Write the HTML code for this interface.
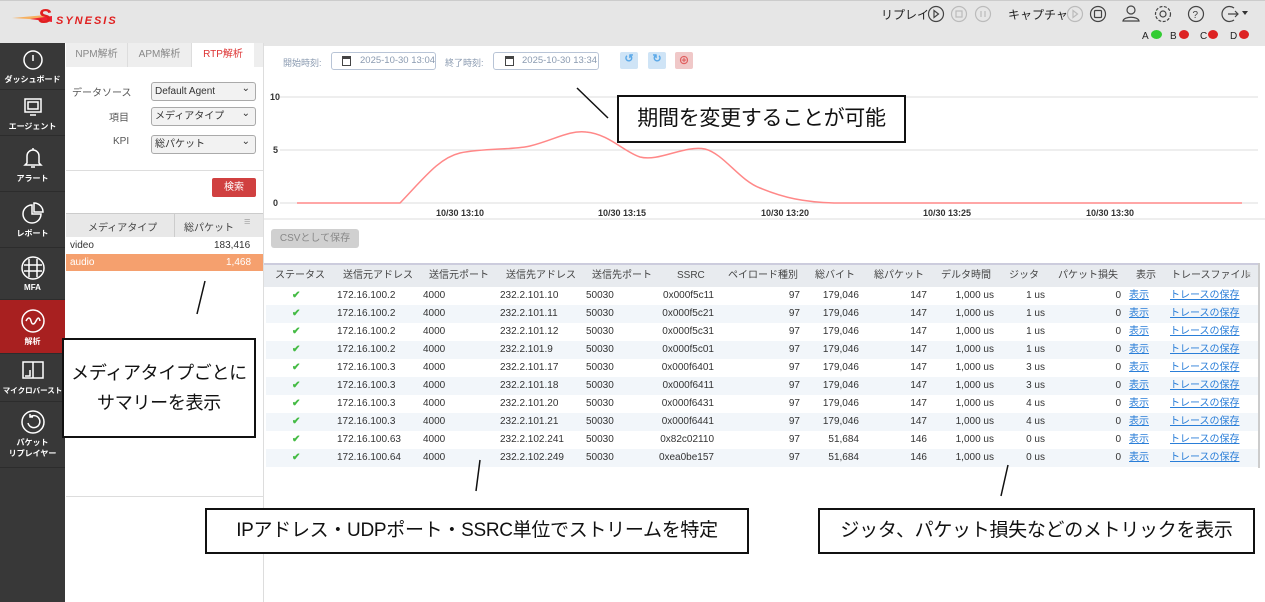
<!DOCTYPE html><html><head><meta charset="utf-8"><style>
*{margin:0;padding:0;box-sizing:border-box}
body{width:1265px;height:602px;position:relative;overflow:hidden;background:#fff;font-family:"Liberation Sans","Noto Sans CJK JP",sans-serif;font-size:10px;color:#333}
.a{position:absolute;white-space:nowrap}
.side .it{position:absolute;left:0;width:65px;color:#fff;font-size:8px;font-weight:bold;text-align:center;border-bottom:1px solid #2c2c2c}
.sel{position:absolute;left:151px;width:105px;height:19px;border:1px solid #aaa;border-radius:3px;background:#f2f2f2;font-size:10px;line-height:15px;padding:1px 3px;color:#333}
.sel:after{content:"⌄";position:absolute;right:5px;top:-2px;font-size:10px}
.box{position:absolute;border:2px solid #111;background:#fff;color:#111;text-align:center;white-space:nowrap;letter-spacing:-0.3px}
.th{position:absolute;top:265px;height:22px;line-height:22px;font-size:10px;color:#444}
.row{position:absolute;left:266px;width:992px;height:18px}
.c{position:absolute;top:3px;font-size:10px;line-height:12px;color:#333}
.lk{color:#2a7ed8;text-decoration:underline}
</style></head><body>
<div class="a" style="left:0;top:0;width:1265px;height:43px;background:#e6e6e6;border-top:1px solid #ccc"></div>
<svg class="a" style="left:12px;top:4px" width="110" height="24"><polygon points="0,14 34,11 34,16" fill="#f6b060"/><polygon points="18,15 40,12 40,18" fill="#e23"/><text x="26" y="19" font-family="Liberation Sans" font-weight="bold" font-style="italic" font-size="20" fill="#e02020">S</text><text x="44" y="20" font-family="Liberation Sans" font-weight="bold" font-style="italic" font-size="11" fill="#e02020" letter-spacing="2">SYNESIS</text></svg>
<div class="a" style="left:881px;top:6px;font-size:12px;color:#222">リプレイ</div>
<svg class="a" style="left:926px;top:4px" width="340" height="20" fill="none" stroke-width="1.2">
<circle cx="10" cy="10" r="7.5" stroke="#444"/><path d="M8 6.5l4.5 3.5-4.5 3.5z" stroke="#444"/>
<circle cx="33" cy="10" r="7.5" stroke="#bbb"/><rect x="30" y="7" width="6" height="6" stroke="#bbb"/>
<circle cx="57" cy="10" r="7.5" stroke="#bbb"/><path d="M55 7v6M59 7v6" stroke="#bbb"/>
<circle cx="149" cy="10" r="7.5" stroke="#bbb"/><path d="M147 6.5l4.5 3.5-4.5 3.5z" stroke="#bbb"/>
<circle cx="172" cy="10" r="7.5" stroke="#444"/><rect x="168.5" y="6.5" width="7" height="7" rx="1" stroke="#444"/>
<circle cx="205" cy="6" r="4" stroke="#444"/><path d="M197 17c1-5 15-5 16 0z" stroke="#444"/>
<circle cx="237" cy="10" r="3" stroke="#444"/><circle cx="237" cy="10" r="7.5" stroke="#444" stroke-dasharray="3 1.5"/>
<circle cx="270" cy="10" r="7.5" stroke="#444"/><text x="266.5" y="14" font-size="10" fill="#444" stroke="none" font-family="Liberation Sans">?</text>
<path d="M308 4a7.5 7.5 0 1 0 0 12" stroke="#444"/><path d="M302 10h10M309 7l3 3-3 3" stroke="#444"/>
<path d="M316 7h6l-3 4z" fill="#333" stroke="none"/></svg>
<div class="a" style="left:1008px;top:6px;font-size:12px;color:#222">キャプチャ</div>
<div class="a" style="left:1142px;top:31px;font-size:10px;color:#222">A</div><div class="a" style="left:1151px;top:30px;width:11px;height:9px;border-radius:50%;background:#3c3"></div>
<div class="a" style="left:1170px;top:31px;font-size:10px;color:#222">B</div><div class="a" style="left:1179px;top:30px;width:10px;height:9px;border-radius:50%;background:#d22"></div>
<div class="a" style="left:1200px;top:31px;font-size:10px;color:#222">C</div><div class="a" style="left:1208px;top:30px;width:10px;height:9px;border-radius:50%;background:#d22"></div>
<div class="a" style="left:1230px;top:31px;font-size:10px;color:#222">D</div><div class="a" style="left:1239px;top:30px;width:10px;height:9px;border-radius:50%;background:#d22"></div>
<div class="side">
<div class="a" style="left:0;top:43px;width:65px;height:559px;background:#383838"></div>
<div class="it" style="top:43px;height:47px"><svg width="24" height="24" style="margin-top:5px" fill="none" stroke="#fff" stroke-width="1.5"><circle cx="12" cy="12" r="9"/><path d="M12 7v6"/></svg><div>ダッシュボード</div></div>
<div class="it" style="top:90px;height:46px"><svg width="24" height="24" style="margin-top:5px" fill="none" stroke="#fff" stroke-width="1.5"><rect x="4" y="4" width="16" height="13"/><rect x="7" y="7" width="10" height="7"/><path d="M9 20h6"/></svg><div>エージェント</div></div>
<div class="it" style="top:136px;height:56px"><svg width="24" height="26" style="margin-top:9px" fill="none" stroke="#fff" stroke-width="1.5"><path d="M6 18V11a6 6 0 0 1 12 0v7l2 2H4z"/><path d="M12 3v2M10 22h4"/></svg><div>アラート</div></div>
<div class="it" style="top:192px;height:56px"><svg width="26" height="26" style="margin-top:8px" fill="none" stroke="#fff" stroke-width="1.5"><path d="M12 5a9 9 0 1 0 9 9h-9z"/><path d="M14 3a9 9 0 0 1 9 9h-9z"/></svg><div>レポート</div></div>
<div class="it" style="top:248px;height:52px"><svg width="26" height="26" style="margin-top:7px" fill="none" stroke="#fff" stroke-width="1.5"><circle cx="13" cy="13" r="11"/><path d="M9 4v18M17 4v18M4 10h18M4 16h18"/></svg><div>MFA</div></div>
<div class="it" style="top:300px;height:54px;background:#a82020"><svg width="26" height="26" style="margin-top:8px" fill="none" stroke="#fff" stroke-width="1.5"><circle cx="13" cy="13" r="11"/><path d="M6 13c2-4 4-4 5 0s3 4 5 0 3-4 4 0"/></svg><div>解析</div></div>
<div class="it" style="top:354px;height:48px"><svg width="26" height="24" style="margin-top:5px" fill="none" stroke="#fff" stroke-width="1.5"><rect x="3" y="3" width="20" height="16"/><path d="M13 3v16M5 17h5v-6"/></svg><div style="font-size:7.5px">マイクロバースト</div></div>
<div class="it" style="top:402px;height:66px"><svg width="26" height="26" style="margin-top:7px" fill="none" stroke="#fff" stroke-width="1.5"><circle cx="13" cy="13" r="11"/><path d="M10 8a6 6 0 1 1-2 6M10 5v3h3"/></svg><div>パケット<br>リプレイヤー</div></div>
</div>
<div class="a" style="left:65px;top:43px;width:199px;height:559px;background:#fff;border-right:1px solid #ddd"></div>
<div class="a" style="left:66px;top:43px;width:62px;height:24px;background:#eee;border-right:1px solid #ddd;color:#888;font-size:10px;text-align:center;line-height:24px">NPM解析</div>
<div class="a" style="left:128px;top:43px;width:64px;height:24px;background:#eee;border-right:1px solid #ddd;color:#888;font-size:10px;text-align:center;line-height:24px">APM解析</div>
<div class="a" style="left:192px;top:43px;width:62px;height:24px;background:#fff;color:#d33;font-size:10px;text-align:center;line-height:24px">RTP解析</div>
<div class="a" style="left:254px;top:43px;width:9px;height:24px;background:#eee"></div>
<div class="a" style="left:72px;top:84px;font-size:10px;color:#555">データソース</div>
<div class="a" style="left:109px;top:109px;font-size:10px;color:#555">項目</div>
<div class="a" style="left:113px;top:136px;font-size:10px;color:#555">KPI</div>
<div class="sel" style="top:82px">Default Agent</div>
<div class="sel" style="top:107px">メディアタイプ</div>
<div class="sel" style="top:135px">総パケット</div>
<div class="a" style="left:66px;top:170px;width:197px;height:1px;background:#ddd"></div>
<div class="a" style="left:212px;top:178px;width:44px;height:19px;background:#d04040;border-radius:2px;color:#fff;font-size:10px;text-align:center;line-height:19px">検索</div>
<div class="a" style="left:66px;top:213px;width:197px;height:24px;background:#e8e8e8;border-top:1px solid #ccc"></div>
<div class="a" style="left:88px;top:219px;font-size:10px;color:#444">メディアタイプ</div>
<div class="a" style="left:174px;top:213px;width:1px;height:24px;background:#ccc"></div>
<div class="a" style="left:184px;top:219px;font-size:10px;color:#444">総パケット</div>
<div class="a" style="left:244px;top:216px;color:#aaa;font-size:11px">≡</div>
<div class="a" style="left:70px;top:240px;font-size:10px">video</div><div class="a" style="left:214px;top:240px;font-size:10px">183,416</div>
<div class="a" style="left:66px;top:254px;width:197px;height:17px;background:#f5a06e"></div>
<div class="a" style="left:70px;top:257px;font-size:10px;color:#fff">audio</div><div class="a" style="left:226px;top:257px;font-size:10px;color:#fff">1,468</div>
<div class="a" style="left:66px;top:496px;width:197px;height:1px;background:#ddd"></div>
<div class="a" style="left:264px;top:43px;width:1001px;height:3px;background:#e6e6e6"></div>
<div class="a" style="left:283px;top:56px;font-size:9px;color:#8a9ab0">開始時刻:</div>
<div class="a" style="left:331px;top:52px;width:105px;height:18px;border:1px solid #b8c4d6;border-radius:3px;font-size:9.5px;line-height:14px;color:#8a9ab0;padding:1px 0 0 28px">2025-10-30 13:04</div>
<div class="a" style="left:445px;top:56px;font-size:9px;color:#8a9ab0">終了時刻:</div>
<div class="a" style="left:493px;top:52px;width:106px;height:18px;border:1px solid #b8c4d6;border-radius:3px;font-size:9.5px;line-height:14px;color:#8a9ab0;padding:1px 0 0 28px">2025-10-30 13:34</div>
<div class="a" style="left:342px;top:56px;width:9px;height:10px;border:1.5px solid #444;border-top-width:3px"></div>
<div class="a" style="left:505px;top:56px;width:9px;height:10px;border:1.5px solid #444;border-top-width:3px"></div>
<div class="a" style="left:620px;top:52px;width:18px;height:17px;background:#cfe4f6;border-radius:2px;color:#5aa8e8;text-align:center;font-size:11px;font-weight:bold">↺</div>
<div class="a" style="left:648px;top:52px;width:18px;height:17px;background:#cfe4f6;border-radius:2px;color:#5aa8e8;text-align:center;font-size:11px;font-weight:bold">↻</div>
<div class="a" style="left:675px;top:52px;width:18px;height:17px;background:#f0c8c8;border-radius:2px;color:#e06060;text-align:center;font-size:11px;font-weight:bold">⊕</div>
<svg class="a" style="left:264px;top:80px" width="1001" height="145">
<g stroke="#ddd" stroke-width="1"><path d="M16 17H994M16 70H994M16 123H994"/></g>
<g font-family="Liberation Sans" font-size="9" font-weight="bold" fill="#333"><text x="6" y="20">10</text><text x="9" y="73">5</text><text x="9" y="126">0</text>
<text x="172" y="136">10/30 13:10</text><text x="334" y="136">10/30 13:15</text><text x="497" y="136">10/30 13:20</text><text x="659" y="136">10/30 13:25</text><text x="822" y="136">10/30 13:30</text></g>
<path d="M33 123H136C160 98 175 78 196 73C220 68 250 70 266 66C290 60 305 50 322 52C345 54 360 72 376 77C395 82 420 65 441 69C460 74 475 100 496 108C520 118 540 122 570 123H978" fill="none" stroke="#f88" stroke-width="1.5"/>
<line x1="0" y1="139" x2="1001" y2="139" stroke="#ddd"/></svg>
<div class="a" style="left:271px;top:229px;width:88px;height:19px;background:#d0d0d0;border-radius:3px;color:#888;font-size:10px;text-align:center;line-height:19px">CSVとして保存</div>
<div class="a" style="left:264px;top:263px;width:995px;height:24px;background:#e8ebef;border-top:2px solid #ccd"></div>
<div class="a" style="left:1258px;top:263px;width:2px;height:205px;background:#ccc"></div>
<div class="th" style="left:275px">ステータス</div><div class="th" style="left:343px">送信元アドレス</div><div class="th" style="left:429px">送信元ポート</div><div class="th" style="left:506px">送信先アドレス</div><div class="th" style="left:592px">送信先ポート</div><div class="th" style="left:677px">SSRC</div><div class="th" style="left:728px">ペイロード種別</div><div class="th" style="left:815px">総バイト</div><div class="th" style="left:874px">総パケット</div><div class="th" style="left:941px">デルタ時間</div><div class="th" style="left:1009px">ジッタ</div><div class="th" style="left:1058px">パケット損失</div><div class="th" style="left:1136px">表示</div><div class="th" style="left:1171px">トレースファイル</div><div class="th" style="left:1245px;color:#aaa">≡</div>
<div id="rows"></div>
<script>
var d=[["172.16.100.2","232.2.101.10","0x000f5c11","179,046",147,"1 us"],["172.16.100.2","232.2.101.11","0x000f5c21","179,046",147,"1 us"],["172.16.100.2","232.2.101.12","0x000f5c31","179,046",147,"1 us"],["172.16.100.2","232.2.101.9","0x000f5c01","179,046",147,"1 us"],["172.16.100.3","232.2.101.17","0x000f6401","179,046",147,"3 us"],["172.16.100.3","232.2.101.18","0x000f6411","179,046",147,"3 us"],["172.16.100.3","232.2.101.20","0x000f6431","179,046",147,"4 us"],["172.16.100.3","232.2.101.21","0x000f6441","179,046",147,"4 us"],["172.16.100.63","232.2.102.241","0x82c02110","51,684",146,"0 us"],["172.16.100.64","232.2.102.249","0xea0be157","51,684",146,"0 us"]];
var h="";d.forEach(function(r,i){var t=287+i*18,o=266;
h+='<div class="row" style="top:'+t+'px;background:'+(i%2?'#f2f6fa':'#fff')+'">'+
'<div class="c" style="left:'+(292-o)+'px;color:#4b4;font-weight:bold">✔</div>'+
'<div class="c" style="left:'+(337-o)+'px">'+r[0]+'</div><div class="c" style="left:'+(423-o)+'px">4000</div>'+
'<div class="c" style="left:'+(500-o)+'px">'+r[1]+'</div><div class="c" style="left:'+(586-o)+'px">50030</div>'+
'<div class="c" style="right:'+(1258-714)+'px">'+r[2]+'</div><div class="c" style="right:'+(1258-800)+'px">97</div>'+
'<div class="c" style="right:'+(1258-859)+'px">'+r[3]+'</div><div class="c" style="right:'+(1258-927)+'px">'+r[4]+'</div>'+
'<div class="c" style="right:'+(1258-994)+'px">1,000 us</div><div class="c" style="right:'+(1258-1045)+'px">'+r[5]+'</div>'+
'<div class="c" style="right:'+(1258-1121)+'px">0</div><div class="c lk" style="left:'+(1129-o)+'px">表示</div>'+
'<div class="c lk" style="left:'+(1170-o)+'px">トレースの保存</div></div>';});
document.getElementById("rows").innerHTML=h;
</script>
<svg class="a" style="left:0;top:0" width="1265" height="602" fill="none" stroke="#111" stroke-width="1.5">
<path d="M577 88L608 118M205 281L197 314M480 460L476 491M1008 465L1001 496"/></svg>
<div class="box" style="left:617px;top:95px;width:289px;height:48px;font-size:21px;line-height:44px">期間を変更することが可能</div>
<div class="box" style="left:62px;top:338px;width:194px;height:100px;font-size:18px;line-height:30px;padding-top:18px">メディアタイプごとに<br>サマリーを表示</div>
<div class="box" style="left:205px;top:508px;width:544px;height:46px;font-size:19px;line-height:42px">IPアドレス・UDPポート・SSRC単位でストリームを特定</div>
<div class="box" style="left:818px;top:508px;width:437px;height:46px;font-size:19px;line-height:42px">ジッタ、パケット損失などのメトリックを表示</div>
</body></html>
